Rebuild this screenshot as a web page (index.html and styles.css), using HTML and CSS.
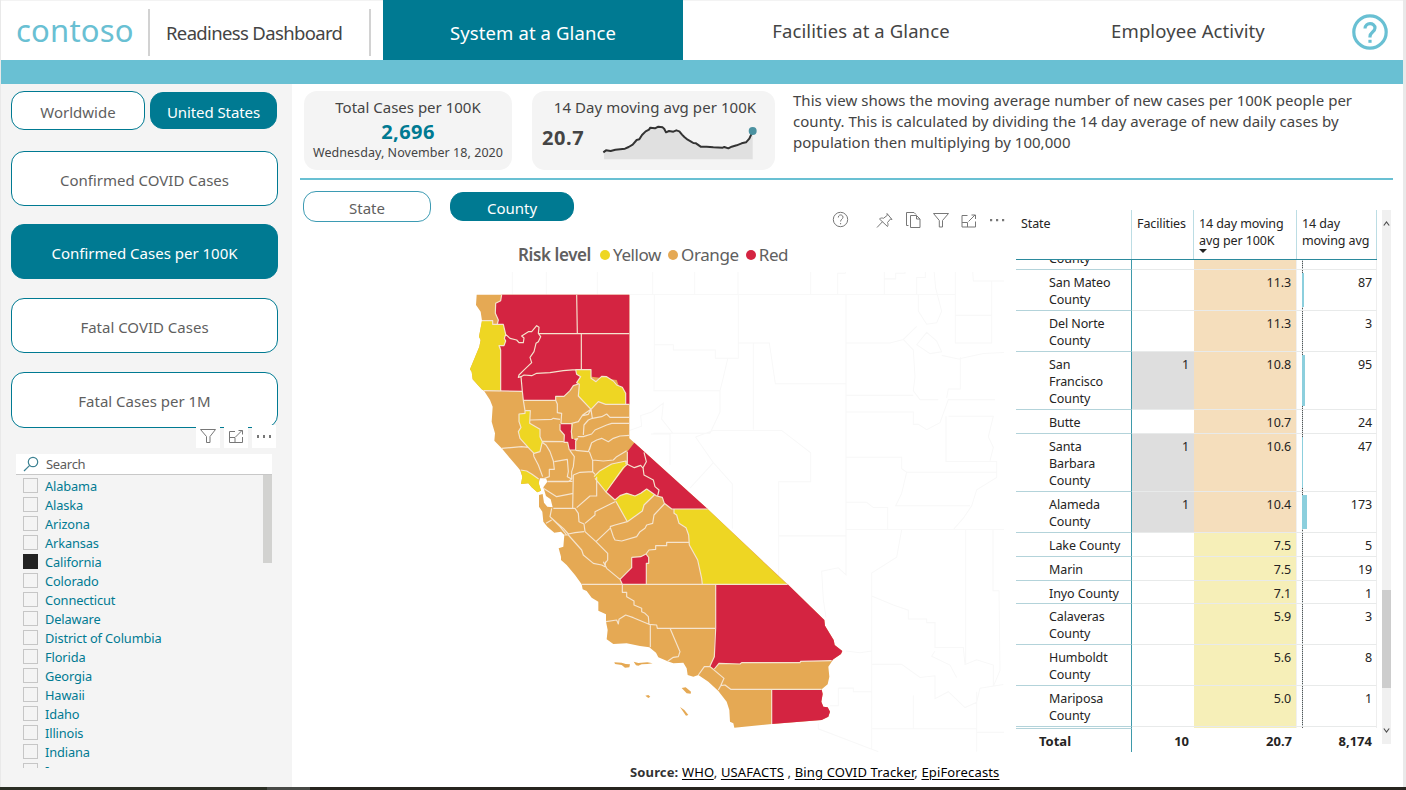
FILE: index.html
```html
<!DOCTYPE html>
<html lang="en">
<head>
<meta charset="utf-8">
<title>Readiness Dashboard</title>
<link rel="stylesheet" href="styles.css">
</head>
<body>
<svg class="defs" width="0" height="0">
  <symbol id="funnel" viewBox="0 0 18 16"><path d="M1.500 1.500h15L11 8.500v6H7.500v-6z"/></symbol>
  <symbol id="focus" viewBox="0 0 18 16"><path d="M8 3.500H2.500v11h13V9M2.500 9.500h5.500v5M8.500 9L15 2.500M11.500 2.500H15.500V6.500"/></symbol>
</svg>
<div class="app">
  <header class="top">
    <div class="logo">contoso</div>
    <div class="product">Readiness Dashboard</div>
    <nav class="tabs">
      <a class="tab active">System at a Glance</a>
      <a class="tab second">Facilities at a Glance</a>
      <a class="tab third">Employee Activity</a>
    </nav>
    <svg class="help" width="36" height="36" viewBox="0 0 36 36"><circle cx="18" cy="18" r="16.200"/><path d="M13 14.500c0-6.500 10-6.500 10-.5 0 4-5 4-5 8.500v1"/><path d="M18 25.800v3"/></svg>
  </header>
  <div class="band"></div>
  <div class="body">
    <aside class="side">
      <div class="pair">
        <button class="btn world">Worldwide</button>
        <button class="btn on us">United States</button>
      </div>
      <button class="btn big">Confirmed COVID Cases</button>
      <button class="btn big on">Confirmed Cases per 100K</button>
      <button class="btn big">Fatal COVID Cases</button>
      <button class="btn big last">Fatal Cases per 1M</button>
      <div class="tools">
        <span><svg width="18" height="16"><use href="#funnel"/></svg></span>
        <span><svg width="18" height="16"><use href="#focus"/></svg></span>
        <span><i></i><i></i><i></i></span>
      </div>
      <div class="search"><svg width="16" height="16" viewBox="0 0 16 16"><circle cx="10" cy="6" r="4.700"/><path d="M6.700 9.300L1 15"/></svg><span>Search</span></div>
      <div class="listwrap">
        <ul class="list">
          <li>Alabama</li><li>Alaska</li><li>Arizona</li><li>Arkansas</li><li class="sel">California</li><li>Colorado</li><li>Connecticut</li><li>Delaware</li><li>District of Columbia</li><li>Florida</li><li>Georgia</li><li>Hawaii</li><li>Idaho</li><li>Illinois</li><li>Indiana</li><li>Iowa</li>
        </ul>
        <div class="thumb"></div>
      </div>
    </aside>
    <main class="main">
      <section class="kpis">
        <div class="card total">
          <div class="ctitle">Total Cases per 100K</div>
          <div class="cvalue">2,696</div>
          <div class="cdate">Wednesday, November 18, 2020</div>
        </div>
        <div class="card avg">
          <div class="ctitle">14 Day moving avg per 100K</div>
          <div class="trend">
            <b>20.7</b>
            <svg width="158" height="42" viewBox="900 120 474 126">
              <path class="area" d="M912 217L920 212 975 206 998 194 1018 177 1035 155 1051 143 1088 142 1100 156 1138 153 1155 172 1172 184 1202 200 1285 204 1340 186 1358 154V238H912z"/>
              <path class="line" d="M910 217L918 211 932 213 946 209 975 206 986 201 998 194 1010 180 1018 178 1026 165 1037 154 1047 149 1051 143 1065 145 1075 140 1088 142 1093 147 1098 157 1107 153 1120 155 1129 151 1138 154 1146 164 1153 171 1163 179 1172 184 1180 189 1188 190 1202 200 1220 200 1240 202 1268 203 1273 201 1285 205 1295 200 1310 196 1325 190 1338 187 1348 176 1358 154"/>
              <circle cx="1358" cy="153" r="12"/>
            </svg>
          </div>
        </div>
        <p class="about">This view shows the moving average number of new cases per 100K people per<br>county. This is calculated by dividing the 14 day average of new daily cases by<br>population then multiplying by 100,000</p>
      </section>
      <div class="rule"></div>
      <section class="content">
        <div class="mapcol">
          <div class="toggles">
            <button class="btn state">State</button>
            <button class="btn on county">County</button>
            <svg class="icons" width="176" height="22" viewBox="830 209 176 22">
              <circle cx="840.500" cy="219.500" r="7.200"/><path d="M838.300 217.500c0-3.500 4.700-3.300 4.700-.3 0 2-2.400 1.800-2.400 4.300M840.600 223v1.300"/>
              <path d="M877 227.500l5.500-5.800M879.500 219l8 7.500c.8-1.500.5-3 0-4l3-3.500 1.500.5-5-6 .3 1.800-3.800 3c-1.500-.6-3-.3-4 .7z"/>
              <path d="M908.500 225.500h-2v-13h7.500l2 2M910.500 215.500h6l3.500 3.500v8.500h-9.500zM916.500 215.500v3.500h3.500"/>
              <path d="M933.500 213.500h15l-6 7v6.500h-3.200v-6.500z"/>
              <path d="M967.500 215.500h-5.500v11.500h13.500v-5.500M962 222.500h5.500v4.500M968.500 221.500l6.500-6.500M971.500 215h4v4"/>
              <path class="dots" d="M990 219h2.200v2.200h-2.200zM996 219h2.200v2.200H996zM1002 219h2.200v2.200h-2.200z"/>
            </svg>
          </div>
          <div class="legend"><b>Risk level</b><span class="y">Yellow</span><span class="o">Orange</span><span class="r">Red</span></div>
          <svg class="map" width="545" height="488" viewBox="0 -24 1635 1464">
            <g class="ghost" transform="translate(120 -135) scale(1 1.062)">
              <path d="M37 100V168M139 100V168M292 100V168M458 100V168M584 100V168M714 100V168M932 100V168M1153 100V168M1013 168V108H1036V100M388 168H1366V100M1153 124H1187V108H1215V100M1276 100V120H1250V168M1302 100L1307 150 1325 215 1310 248 1280 252 1255 215V168M1366 168V305H1475V130H1420L1418 100M1475 130H1512M1366 227H1475M463 168V310H520V325H646V348H715V168M715 305H808L826 420H1038V168M1038 305H1170L1210 295 1250 258M1210 295L1240 325 1245 400 1240 440 1260 465H1315M760 305V550M463 310L462 440H660L668 410 683 350M660 440V500L630 560H460M388 552L425 540 422 510 455 500 490 475 485 520 520 562M640 552H845L932 615V697H836V850H1038V420M836 850V975M1038 453H1240M1038 500H1240V535H1255L1280 550 1320 530 1345 465H1485M1250 310L1280 275 1310 300 1325 330 1290 335ZM1325 340L1375 350 1450 335 1512 332M1381 345V435H1345L1340 460M1345 512H1480L1465 570 1480 600 1470 638M1338 512V640H1490V685L1430 720 1415 765 1390 800 1360 832M1038 628H1205V660L1220 670H1490M1220 670L1205 730 1187 765H1410M1038 755H1100L1120 770H1163V832M1038 832H1512M586 570L640 643 570 715M640 643L697 703V830M588 570L640 552M453 562H510V650M1205 832L1190 910 1115 955V1455M1397 832V1210M1479 832V1005H1497L1500 1230 1480 1275V1215L1430 1200 1395 1213 1390 1165H1305V1095H1280V1085H1225V1060L1180 1045 1115 1020M1038 850V960L1015 940 965 950 970 1030 978 1080M1038 1175L1080 1180 1115 1175M1115 1213H1205L1260 1250 1305 1245V1310L1345 1290 1395 1335 1430 1320 1440 1280 1510 1270M1305 1175L1295 1190 1350 1215 1370 1250M1240 1300V1395M1115 1395H1430V1290M1430 1405H1512M1430 1395V1460M1015 1280H1060V1290H1115M1015 1280V1330H990M955 1380V1395L1135 1460"/>
            </g>
            <path class="base" d="M50 44H508V475L523 488 743 687 983 913 1093 1020 1095 1037 1110 1062 1121 1080 1124 1095 1147 1113 1143 1122 1120 1138 1105 1160 1108 1190 1103 1213 1085 1228 1088 1242 1084 1265 1090 1280 1103 1282 1110 1295 1105 1310 1085 1320 935 1332 823 1343 820 1330 810 1325 808 1290 800 1265 775 1233 745 1205 715 1185 700 1190 683 1185 680 1165 670 1148 640 1150 623 1144 595 1132 588 1118 568 1102 540 1098 500 1090 460 1092 440 1078 443 1050 438 1025V1003L415 992V965L395 953 380 933 368 928 365 913 345 885 320 855 303 840 303 830 296 805 310 800 313 765 303 755 283 758 262 740 250 725 247 695 237 680V645L248 642 252 668 262 680 278 682 272 658 258 648 250 622 262 605 258 595H240L236 610 243 632 232 637 215 622 205 610 183 612 187 590 180 570 172 560 150 535 125 505 103 482 105 460 95 425 98 380 90 360 72 332 65 328 38 298 35 275 30 268 58 200 62 180 57 170 66 122 62 95 48 75z"/>
            <g class="red">
              <path d="M125 44H508V373H497L470 300 395 290 362 270V290L355 310 340 317 330 332 312 348H287V361H190L187 334H122V200H117V195H132L137 183 133 175 137 163 130 135 112 132 115 120 106 100 107 70 122 62z"/>
              <path d="M300 432H333V475L343 478 353 476 347 483V510H328L323 487 312 487 313 465 300 450z"/>
              <path d="M523 488L502 515V553L490 563 438 636 465 660 480 647 500 640 525 648 542 640 560 627 590 648 607 652 613 670 635 687H743z"/>
              <path d="M515 832L542 830 558 822 566 832V850L559 852V913H487L480 898 515 863z"/>
              <path d="M767 915L983 913 1093 1020 1095 1037 1110 1062 1121 1080 1124 1095 1147 1113 1143 1122 1120 1138 1115 1142 1022 1144 1020 1148H845L840 1152 777 1150 763 1167 750 1158 763 1130 765 1040z"/>
              <path d="M935 1229H1085L1088 1242 1084 1265 1090 1280 1103 1282 1110 1295 1105 1310 1085 1320 935 1332z"/>
            </g>
            <g class="yellow">
              <path d="M66 122H98V133L130 135 137 163 133 175 137 183 132 197 117 198 122 210V331H72L65 328 38 298 35 275 30 268 58 200 62 180 57 170z"/>
              <path d="M347 269H393V295L408 305 425 289 440 290 460 303 470 315 487 322 497 340V373H437L415 365 393 388 355 348 358 313 350 308 362 290 350 283z"/>
              <path d="M195 392H211L209 430 240 448V470L247 485 240 515 222 520 210 508 180 475 175 455 183 442 177 425V402L195 400z"/>
              <path d="M182 570L200 573 215 582 236 597 237 612 243 632 232 637 215 622 205 610 183 612 187 590z"/>
              <path d="M498 543L500 555 438 636 405 595 403 585 420 572 455 552z"/>
              <path d="M467 663L480 648 500 640 525 648 542 640 560 627 583 645 552 675 547 693 502 725z"/>
              <path d="M642 688H743L980 913H727L725 895 713 840 688 795 686 765 678 743 657 730 650 705 642 700z"/>
            </g>
            <path class="borders" d="M125 44L122 62 107 70 106 100 115 120 112 132M66 122H98V133H130L137 163 133 175 137 183 132 197H117L122 210V334M350 44L352 161M237 161H508M364 161V269M137 163L150 175 170 180 177 188 190 188 192 174 185 168 205 155 215 155 230 137 237 142 235 160 242 170 235 185 228 190 222 215 210 232 215 248 190 272 177 285 175 292 183 290 192 285 215 287 230 280 270 278 310 272 347 269M183 290L187 334 190 361 195 392M72 332L187 334M190 361H287V349H312L330 332 340 317 355 312M287 361L292 372V398L305 400 303 430M211 420L275 418 280 415 300 418M303 431H333L355 425 368 405 393 388 397 415 425 410 440 402 450 412H508M437 373H508M393 388L385 403 368 407M397 415L385 420 372 435 370 465M353 470L370 470 395 462 405 450 440 435 455 430H508M337 432L334 455 337 477M388 510L395 488 410 480 425 475 445 485 460 475 480 468 508 466M347 511L385 515 395 488M388 515L398 542V575L405 583M398 540L430 543 460 540 470 530 500 512M402 590L420 572 455 552 498 543V553M125 505L185 500 205 502M248 488L258 495 270 515 280 543 283 568H268V590L248 597M220 520L222 530 235 555 248 590M248 484L310 485M283 545L322 538 325 575 322 590 335 597M330 512L343 530 340 560 335 575V597L325 605H262M337 604H262M340 585L360 577 398 575M340 585L338 683M410 590V648H390L350 683M250 625L290 650 340 640M280 685H345L355 700 357 725 372 732 375 755 408 785 450 745M275 685L270 710 290 728 310 745 325 762 345 758 372 755M375 730L405 705V695L465 665M450 740L465 735 502 725M450 740L460 770 465 780 485 783 530 770 540 755 555 745 560 735 578 730 582 705 613 672M688 787H620V797H587V808L567 810 558 822M313 765H325L365 810 370 825 400 850 425 855 435 860 437 845M408 785L443 820V840L435 850M430 845L440 865 480 898M365 913H983M258 730L275 720M270 710L300 740 320 765M487 913V937H500V950L522 963V975L545 985V995L555 1000 565 1010 567 1033M438 1025L470 1020 475 1032 477 1018 497 1005 520 1013 567 1033 590 1035 592 1045H765M571 1033V1102M630 1045L660 1115 655 1130 640 1132 623 1144M767 915V1045L763 1130 750 1158M715 1185L733 1160H750L792 1195 782 1217 775 1230M782 1217L795 1215 812 1228H1085M763 1167L777 1150 840 1152 845 1148H1020L1022 1144 1115 1142M935 1229V1332M502 515V553L523 563 542 556 551 567M552 517L559 545 549 563 552 585 580 600 585 620 597 630 593 648M502 553L490 563 438 636 465 660 480 647 500 640 525 648 542 640 560 627 590 648 607 652 613 670 635 687H743M467 663L502 725 547 693 552 675 583 645M642 688V700L650 705 657 730 678 743 686 765 688 795 713 840 725 895 727 913M405 595L438 636M515 832L542 830 558 822 566 832V850H559V913M487 913L480 898 515 863V832M347 269H393V295L408 305 425 289 440 290 460 303 470 315 487 322 497 340V373H437L415 365 393 388 355 348 358 313 350 308 362 290 350 283zM195 392H211L209 430 240 448V470L247 485 240 515 222 520 210 508 180 475 175 455 183 442 177 425V402L195 400zM182 570L200 573 215 582 236 597M300 432V450L313 465 312 487H323L328 510H347V483L353 476 343 478"/>
            <g class="islands" transform="translate(300 840)">
              <path d="M163 307L185 308 197 312 210 313 208 322 195 323 185 315 165 312zM221 305L235 309 262 307 278 310 262 312 245 313 235 317 228 316zM365 384L377 382 393 395 392 401 380 400zM256 407L265 405 271 410 265 414zM360 441L373 450 385 465 378 467z"/>
            </g>
          </svg>
          <div class="source"><b>Source:</b> <u>WHO</u>, <u>USAFACTS</u> , <u>Bing COVID Tracker</u>, <u>EpiForecasts</u></div>
        </div>
        <div class="tablecol">
          <div class="grid">
            <div class="row head"><div>State</div><div>Facilities</div><div>14 day moving<br>avg per 100K<i class="sort"></i></div><div>14 day<br>moving avg</div></div>
            <div class="rows">
              <div class="row orange"><div>Solano<br>County</div><div></div><div></div><div></div></div>
              <div class="row orange"><div>San Mateo<br>County</div><div></div><div>11.3</div><div><i style="width:1.5px"></i>87</div></div>
              <div class="row orange"><div>Del Norte<br>County</div><div></div><div>11.3</div><div>3</div></div>
              <div class="row orange"><div>San<br>Francisco<br>County</div><div class="has">1</div><div>10.8</div><div><i style="width:2.5px"></i>95</div></div>
              <div class="row orange"><div>Butte</div><div></div><div>10.7</div><div>24</div></div>
              <div class="row orange"><div>Santa<br>Barbara<br>County</div><div class="has">1</div><div>10.6</div><div><i style="width:0.5px"></i>47</div></div>
              <div class="row orange"><div>Alameda<br>County</div><div class="has">1</div><div>10.4</div><div><i style="width:4.5px"></i>173</div></div>
              <div class="row"><div>Lake County</div><div></div><div>7.5</div><div>5</div></div>
              <div class="row"><div>Marin</div><div></div><div>7.5</div><div>19</div></div>
              <div class="row tight"><div>Inyo County</div><div></div><div>7.1</div><div>1</div></div>
              <div class="row"><div>Calaveras<br>County</div><div></div><div>5.9</div><div>3</div></div>
              <div class="row"><div>Humboldt<br>County</div><div></div><div>5.6</div><div>8</div></div>
              <div class="row"><div>Mariposa<br>County</div><div></div><div>5.0</div><div>1</div></div>
              <div class="row"><div></div><div></div><div></div><div></div></div>
            </div>
            <div class="row totals"><div>Total</div><div>10</div><div>20.7</div><div>8,174</div></div>
          </div>
          <div class="scroll">
            <svg width="9" height="9" viewBox="0 0 9 9"><path d="M1.800 6.500L4.500 3 7.200 6.500"/></svg>
            <div class="sthumb"></div>
            <svg width="9" height="9" viewBox="0 0 9 9"><path d="M1.800 2.500L4.500 6 7.200 2.500"/></svg>
          </div>
        </div>
      </section>
    </main>
  </div>
  <footer class="foot"></footer>
</div>
</body>
</html>
```
FILE: styles.css
```css
* { box-sizing: border-box; }
body { margin: 0; font-family: "Noto Sans", "Open Sans", sans-serif; color: #444; background: #e9e9e9; }
.defs { display: block; }
.app { width: 1406px; height: 790px; overflow: hidden; display: flex; flex-direction: column; }
.top { height: 60px; margin: 0 3px 0 1px; background: #fff; display: flex; flex: none; border-top: 1px solid #f3f3f3; }
.logo { width: 149px; height: 47px; margin-top: 8px; padding-left: 15px; border-right: 2px solid #d2d2d2; color: #69c0d3; font-size: 31px; line-height: 43px; letter-spacing: .2px; white-space: nowrap; }
.product { width: 221px; height: 47px; margin-top: 8px; padding-left: 16px; border-right: 2px solid #d2d2d2; font-size: 18.500px; line-height: 48px; letter-spacing: -.65px; white-space: nowrap; }
.tabs { display: flex; margin-left: 12px; flex: 1; margin-top: -1px; }
.tab { height: 60px; line-height: 62px; text-align: center; font-size: 18.500px; letter-spacing: .1px; white-space: nowrap; }
.tab.active { width: 300px; background: #007a92; color: #fff; line-height: 66px; }
.tab.second { width: 356px; }
.tab.third { width: 298px; }
.help { margin: 13px 15px 0 0; fill: none; stroke: #69c0d3; stroke-width: 3.200; flex: none; }
.band { height: 24px; margin: 0 3px 0 1px; background: #69c0d3; flex: none; }
.body { height: 703px; margin: 0 3px 0 1px; display: flex; flex: none; background: #fff; }
.foot { height: 3px; background: linear-gradient(90deg, #2b2e24 0 267px, #484a46 267px 310px, #28251f 310px); }

.btn { font-family: inherit; display: block; border: 1px solid #007a92; background: #fff; color: #5f5f5f; border-radius: 13px; padding: 3px 0 0; text-align: center; font-size: 15px; letter-spacing: 0; white-space: nowrap; }
.btn.on { background: #007a92; color: #fff; }
.btn.us { letter-spacing: -.08px; }
.side { width: 291px; background: #f4f4f4; padding: 7px 0 0 10px; flex: none; }
.pair { display: flex; align-items: center; gap: 5px; height: 39px; margin-bottom: 21px; }
.world { width: 134px; height: 39px; }
.us { width: 127px; height: 37px; }
.big { width: 267px; height: 55px; margin-bottom: 18.400px; }
.big.last { height: 56px; margin-top: 19px; margin-bottom: 18px; }
.tools { display: flex; gap: 4px; margin: -21px 0 6px 185px; position: relative; }
.tools span { width: 24px; height: 23px; background: #fff; display: flex; align-items: center; justify-content: center; gap: 3.500px; }
.tools svg { fill: none; stroke: #777; stroke-width: 1; }
.tools i { width: 2.500px; height: 2.500px; background: #777; }
.search { width: 256px; height: 21px; margin-left: 5px; background: #fff; border-bottom: 1px solid #c8c8c8; display: flex; gap: 7px; padding: 1px 0 0 7px; align-items: center; font-size: 13px; letter-spacing: -.3px; color: #5c5c5c; }
.search svg { fill: none; stroke: #3c8192; stroke-width: 1.200; }
.listwrap { width: 256px; height: 293px; margin-left: 5px; overflow: hidden; display: flex; justify-content: space-between; }
.list { list-style: none; margin: 2px 0 0 8px; padding: 0; color: #007a92; font-size: 12.800px; letter-spacing: -.12px; }
.list li { height: 19px; line-height: 19px; display: flex; align-items: center; gap: 8px; white-space: nowrap; margin-left: -1px; }
.list li::before { content: ""; width: 13px; height: 13px; border: 1px solid #c6c6c6; margin-top: -2px; margin-right: -1px; }
.list .sel::before { background: #222; border-color: #222; }
.thumb { width: 9px; height: 88px; background: #d2d2d0; }

.main { flex: 1; padding: 7px 10px 0 8px; min-width: 0; }
.kpis { display: flex; height: 79px; margin-left: 4px; }
.card { height: 79px; border-radius: 13px; background: #f4f4f4; text-align: center; white-space: nowrap; }
.total { width: 208px; }
.avg { width: 243px; margin-left: 20px; }
.ctitle { font-size: 15px; line-height: 20px; padding-top: 6px; margin-bottom: 1px; letter-spacing: 0; }
.avg .ctitle { letter-spacing: .07px; padding-left: 3px; }
.cvalue { font-size: 20px; font-weight: 700; line-height: 24px; margin-top: 3px; letter-spacing: .4px; color: #007a92; }
.cdate { font-size: 12.500px; line-height: 17px; letter-spacing: .05px; }
.trend { display: flex; }
.trend b { font-size: 20px; line-height: 28px; margin-top: 6px; width: 68px; padding-left: 10px; text-align: left; letter-spacing: .6px; }
.trend svg { margin-top: 2px; }
.trend .area { fill: #e0e0e0; }
.trend .line { fill: none; stroke: #333; stroke-width: 6; stroke-linejoin: round; }
.trend circle { fill: #4b92a1; }
.about { margin: -1px 0 0 18px; font-size: 15px; line-height: 21px; letter-spacing: .03px; white-space: nowrap; }
.rule { height: 2px; margin-top: 8px; background: #69c0d3; }
.content { display: flex; height: 607px; }
.mapcol { width: 716px; padding-top: 11px; flex: none; }
.toggles { display: flex; height: 40px; padding-left: 3px; align-items: flex-start; }
.state { width: 128px; height: 31px; border-color: #3d9bb3; }
.county { width: 124px; height: 29px; margin: 1px 0 0 19px; }
.icons { margin: 18px 0 0 256px; fill: none; stroke: #777; stroke-width: 1; }
.icons .dots { fill: #777; stroke: none; }
.legend { display: flex; margin: 12px 0 0 218px; height: 24px; line-height: 24px; font-size: 17px; letter-spacing: -.4px; color: #606060; align-items: center; white-space: nowrap; }
.legend b { font-weight: 600; margin-right: 9px; }
.legend span { display: flex; align-items: center; gap: 3px; margin-right: 7px; }
.legend span::before { content: ""; width: 10px; height: 10px; border-radius: 50%; }
.legend .y::before { background: #eed623; }
.legend .o::before { background: #e5a954; }
.legend .r::before { background: #d42441; }
.map { display: block; margin: 5px 0 0 160px; }
.ghost { fill: none; stroke: #f8f8f8; stroke-width: 3; }
.base, .islands { fill: #e5a954; }
.red { fill: #d42441; }
.yellow { fill: #eed623; }
.borders { fill: none; stroke: #f5e4ce; stroke-width: 3.500; stroke-linejoin: round; }
.source { margin: 2px 0 0 330px; font-size: 13px; line-height: 20px; letter-spacing: .14px; white-space: nowrap; color: #333; }
.source u { color: #000; text-underline-offset: 2px; }

.tablecol { display: flex; gap: 5px; padding-top: 30px; color: #252423; font-size: 12.500px; letter-spacing: -.1px; line-height: 17px; }
.grid { width: 361px; }
.row { display: grid; grid-template-columns: 116px 62px 103px 80px; white-space: nowrap; }
.head { height: 50px; border-bottom: 1px solid #2b8a9d; }
.head > div { padding: 5px 0 0 5px; border-right: 1px solid #bcdde4; }
.sort { display: block; width: 0; border: 4px solid transparent; border-top-color: #222; border-bottom: 0; }
.rows { height: 468px; overflow: hidden; display: flex; flex-direction: column; }
.rows .row { flex: none; }
.rows .row:first-child { margin-top: -31px; }
.rows .row > div { padding: 4px 5px 2px 5px; border-bottom: 1px solid #e8eaea; text-align: right; min-height: 24px; }
.rows .row.tight > div { padding-bottom: 1px; min-height: 23px; }
.rows .row > div:first-child { padding-left: 33px; text-align: left; border-right: 1px solid #3e99aa; border-bottom-color: #b3d3da; }
.rows .row > div:nth-child(3) { background: #f6efb8; border-right: 1px solid #f0f0f0; }
.rows .row.orange > div:nth-child(3) { background: #f5debc; }
.rows .row .has { background: #dedede; }
.rows .row > div:last-child { display: flex; justify-content: flex-end; background: repeating-linear-gradient(#555 0 1px, #b9c8cc 1px 2px) 5px 0 / 1px 100% no-repeat; border-right: 1px solid #eee; padding-right: 4px; }
.rows i { background: #8ccfdd; margin: -1px auto 1px 0; }
.totals { height: 24px; font-weight: 700; font-size: 13px; line-height: 22px; letter-spacing: 0; }
.totals > div { text-align: right; padding: 2px 5px 0; }
.totals > div:first-child { text-align: left; padding: 1px 0 0 23px; border-right: 1px solid #3e99aa; border-top: 1px solid #b3d3da; }
.scroll { width: 9px; height: 534px; background: #f0f0f0; display: flex; flex-direction: column; align-items: center; padding: 9px 0 9px; }
.scroll svg { fill: none; stroke: #505050; stroke-width: 1.200; flex: none; }
.sthumb { width: 9px; height: 98px; margin: 362px 0 auto; background: #cdcdcd; flex: none; }
```
